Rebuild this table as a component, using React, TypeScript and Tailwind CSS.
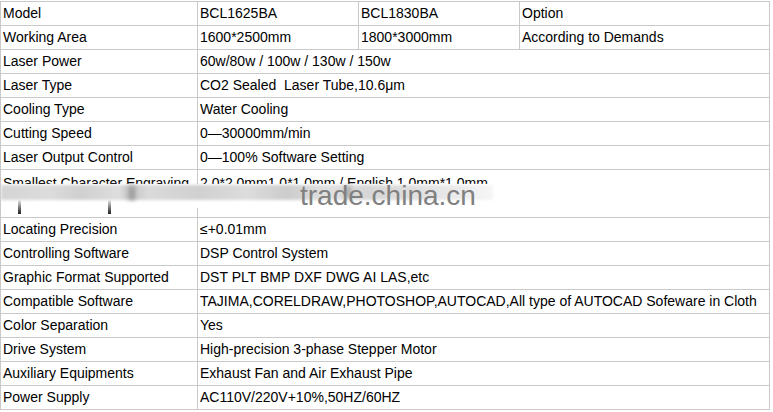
const rows: { label: string; values: string[] }[] = [
  { label: 'Model', values: ['BCL1625BA', 'BCL1830BA', 'Option'] },
  { label: 'Working Area', values: ['1600*2500mm', '1800*3000mm', 'According to Demands'] },
  { label: 'Laser Power', values: ['60w/80w / 100w / 130w / 150w'] },
  { label: 'Laser Type', values: ['CO2 Sealed\u00a0 Laser Tube,10.6μm'] },
  { label: 'Cooling Type', values: ['Water Cooling'] },
  { label: 'Cutting Speed', values: ['0—30000mm/min'] },
  { label: 'Laser Output Control', values: ['0—100% Software Setting'] },
];

const rowsAfter: { label: string; values: string[] }[] = [
  { label: 'Locating Precision', values: ['≤+0.01mm'] },
  { label: 'Controlling Software', values: ['DSP Control System'] },
  { label: 'Graphic Format Supported', values: ['DST PLT BMP DXF DWG AI LAS,etc'] },
  {
    label: 'Compatible Software',
    values: ['TAJIMA,CORELDRAW,PHOTOSHOP,AUTOCAD,All type of AUTOCAD Sofeware in Cloth'],
  },
  { label: 'Color Separation', values: ['Yes'] },
  { label: 'Drive System', values: ['High-precision 3-phase Stepper Motor'] },
  { label: 'Auxiliary Equipments', values: ['Exhaust Fan and Air Exhaust Pipe'] },
  { label: 'Power Supply', values: ['AC110V/220V+10%,50HZ/60HZ'] },
];

function Row({ label, values }: { label: string; values: string[] }) {
  return (
    <div className="flex h-6 border-b border-[#c9c9c9]">
      <div className="w-[197px] shrink-0 border-r border-[#c9c9c9] pl-[2px] pb-[2px] flex items-center">{label}</div>
      {values.length === 1 ? (
        <div className="w-[572px] border-r border-[#c9c9c9] pl-[2px] pb-[2px] flex items-center whitespace-nowrap">
          {values[0]}
        </div>
      ) : (
        <>
          <div className="w-[161px] border-r border-[#c9c9c9] pl-[2px] pb-[2px] flex items-center">{values[0]}</div>
          <div className="w-[161px] border-r border-[#c9c9c9] pl-[2px] pb-[2px] flex items-center">{values[1]}</div>
          <div className="w-[250px] border-r border-[#c9c9c9] pl-[2px] pb-[2px] flex items-center">{values[2]}</div>
        </>
      )}
    </div>
  );
}

export default function App() {
  return (
    <div className="w-[773px] h-[412px] bg-white pt-px text-[14px] leading-none text-black font-['Liberation_Sans',Arial,sans-serif] overflow-hidden">
      <div className="relative w-[770px] border-t border-l border-[#c9c9c9]">
        {rows.map((r) => (
          <Row key={r.label} {...r} />
        ))}

        {/* engraving row, half hidden under the watermark */}
        <div className="flex h-12 border-b border-[#c9c9c9]">
          <div className="w-[197px] shrink-0 border-r border-[#c9c9c9] pl-[2px] pt-[6px]">
            Smallest Character Engraving
          </div>
          <div className="w-[572px] border-r border-[#c9c9c9] pl-[2px] pt-[6px] whitespace-nowrap">
            2.0*2.0mm1.0*1.0mm / English 1.0mm*1.0mm
          </div>
        </div>

        {rowsAfter.map((r) => (
          <Row key={r.label} {...r} />
        ))}

        {/* watermark smear */}
        <div className="absolute left-0 top-[182px] w-[500px] h-[24px] bg-white" />
        <div className="absolute left-0 top-[183px] w-[492px] h-[15px] blur-[1.5px] bg-[linear-gradient(90deg,#d4d4d4_0%,#dcdcdc_10%,#cfcfcf_16%,#dedede_24%,#c4c4c4_26%,#dadada_30%,#d0d0d0_40%,#dcdcdc_50%,#cccccc_58%,#e0e0e0_66%,#d6d6d6_75%,#e4e4e4_88%,#f6f6f6_100%)]" />
        <div className="absolute left-[128px] top-[184px] w-[6px] h-[14px] bg-[#9c9c9c] blur-[2px]" />
        <div className="absolute left-[344px] top-[184px] w-[6px] h-[12px] bg-[#a8a8a8] blur-[2px]" />
        <div className="absolute left-[17px] top-[198px] w-[3px] h-[14px] bg-gradient-to-b from-[#ececec] to-[#222] blur-[0.5px]" />
        <div className="absolute left-[107px] top-[198px] w-[3px] h-[14px] bg-gradient-to-b from-[#ececec] to-[#222] blur-[0.5px]" />
        <div className="absolute left-[299px] top-[180px] text-[28px] leading-none text-[#808080]">
          trade.china.cn
        </div>
      </div>
    </div>
  );
}
